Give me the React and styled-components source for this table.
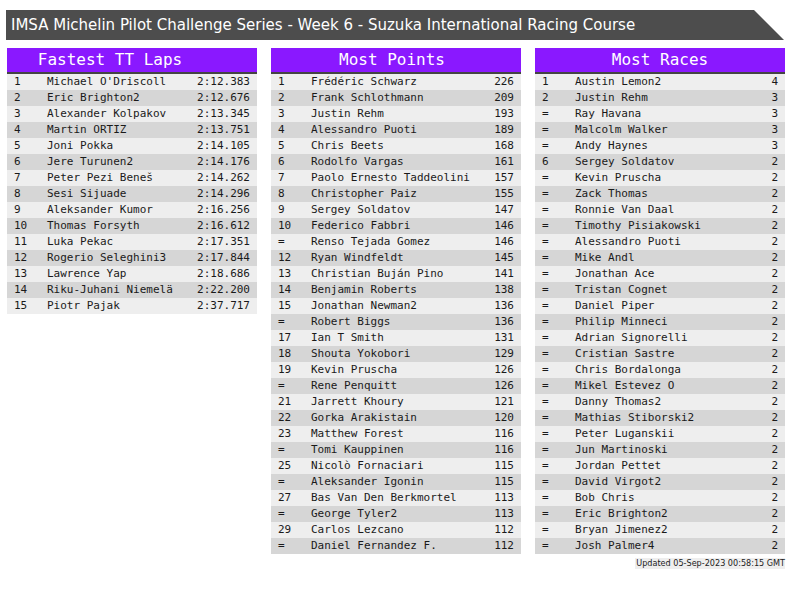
import React from "react";
import styled, { createGlobalStyle } from "styled-components";

const Global = createGlobalStyle`
  html, body { margin: 0; padding: 0; background: #fff; }
  body { font-family: "DejaVu Sans", sans-serif; }
`;

const Page = styled.div`
  padding: 10px 15px 0 6px;
  width: 800px;
  box-sizing: border-box;
`;

const TitleBar = styled.div`
  height: 30px;
  width: 778px;
  background: #4d4d4d;
  color: #fff;
  font-family: "DejaVu Sans", sans-serif;
  font-size: 15px;
  line-height: 30px;
  padding-left: 5px;
  box-sizing: border-box;
  clip-path: polygon(0 0, 748px 0, 100% 100%, 0 100%);
  white-space: nowrap;
`;

const Columns = styled.div`
  display: flex;
  align-items: flex-start;
  gap: 14px;
  margin-top: 8px;
  padding-left: 1px;
`;

const Panel = styled.div`
  width: 250px;
  display: flex;
  flex-direction: column;
`;

const Header = styled.div`
  height: 24px;
  background: #8a18ff;
  color: #fff;
  border-bottom: 2px solid #444;
  font-family: "DejaVu Sans Mono", monospace;
  font-size: 16px;
  line-height: 24px;
  text-align: center;
  padding-right: ${(p) => p.$shift || 0}px;
  white-space: nowrap;
`;

const Row = styled.div`
  display: grid;
  grid-template-columns: 33px 1fr auto;
  height: 16px;
  line-height: 16px;
  padding: 0 7px 0 7px;
  background: ${(p) => (p.$alt ? "#d6d6d6" : "#eeeeee")};
  font-family: "DejaVu Sans Mono", monospace;
  font-size: 11px;
  color: #1a1a1a;
  white-space: nowrap;
`;

const Value = styled.span`
  text-align: right;
`;

const Updated = styled.div`
  align-self: flex-end;
  margin-top: 4px;
  background: #eeeeee;
  color: #222;
  font-family: "DejaVu Sans Condensed", "DejaVu Sans", sans-serif;
  font-stretch: condensed;
  font-size: 9px;
  line-height: 11px;
  padding: 0 0 0 1px;
`;

const laps = [
  ["1", "Michael O'Driscoll", "2:12.383"],
  ["2", "Eric Brighton2", "2:12.676"],
  ["3", "Alexander Kolpakov", "2:13.345"],
  ["4", "Martin ORTIZ", "2:13.751"],
  ["5", "Joni Pokka", "2:14.105"],
  ["6", "Jere Turunen2", "2:14.176"],
  ["7", "Peter Pezi Beneš", "2:14.262"],
  ["8", "Sesi Sijuade", "2:14.296"],
  ["9", "Aleksander Kumor", "2:16.256"],
  ["10", "Thomas Forsyth", "2:16.612"],
  ["11", "Luka Pekac", "2:17.351"],
  ["12", "Rogerio Seleghini3", "2:17.844"],
  ["13", "Lawrence Yap", "2:18.686"],
  ["14", "Riku-Juhani Niemelä", "2:22.200"],
  ["15", "Piotr Pajak", "2:37.717"],
];

const points = [
  ["1", "Frédéric Schwarz", "226"],
  ["2", "Frank Schlothmann", "209"],
  ["3", "Justin Rehm", "193"],
  ["4", "Alessandro Puoti", "189"],
  ["5", "Chris Beets", "168"],
  ["6", "Rodolfo Vargas", "161"],
  ["7", "Paolo Ernesto Taddeolini", "157"],
  ["8", "Christopher Paiz", "155"],
  ["9", "Sergey Soldatov", "147"],
  ["10", "Federico Fabbri", "146"],
  ["=", "Renso Tejada Gomez", "146"],
  ["12", "Ryan Windfeldt", "145"],
  ["13", "Christian Buján Pino", "141"],
  ["14", "Benjamin Roberts", "138"],
  ["15", "Jonathan Newman2", "136"],
  ["=", "Robert Biggs", "136"],
  ["17", "Ian T Smith", "131"],
  ["18", "Shouta Yokobori", "129"],
  ["19", "Kevin Pruscha", "126"],
  ["=", "Rene Penquitt", "126"],
  ["21", "Jarrett Khoury", "121"],
  ["22", "Gorka Arakistain", "120"],
  ["23", "Matthew Forest", "116"],
  ["=", "Tomi Kauppinen", "116"],
  ["25", "Nicolò Fornaciari", "115"],
  ["=", "Aleksander Igonin", "115"],
  ["27", "Bas Van Den Berkmortel", "113"],
  ["=", "George Tyler2", "113"],
  ["29", "Carlos Lezcano", "112"],
  ["=", "Daniel Fernandez F.", "112"],
];

const races = [
  ["1", "Austin Lemon2", "4"],
  ["2", "Justin Rehm", "3"],
  ["=", "Ray Havana", "3"],
  ["=", "Malcolm Walker", "3"],
  ["=", "Andy Haynes", "3"],
  ["6", "Sergey Soldatov", "2"],
  ["=", "Kevin Pruscha", "2"],
  ["=", "Zack Thomas", "2"],
  ["=", "Ronnie Van Daal", "2"],
  ["=", "Timothy Pisiakowski", "2"],
  ["=", "Alessandro Puoti", "2"],
  ["=", "Mike Andl", "2"],
  ["=", "Jonathan Ace", "2"],
  ["=", "Tristan Cognet", "2"],
  ["=", "Daniel Piper", "2"],
  ["=", "Philip Minneci", "2"],
  ["=", "Adrian Signorelli", "2"],
  ["=", "Cristian Sastre", "2"],
  ["=", "Chris Bordalonga", "2"],
  ["=", "Mikel Estevez O", "2"],
  ["=", "Danny Thomas2", "2"],
  ["=", "Mathias Stiborski2", "2"],
  ["=", "Peter Luganskii", "2"],
  ["=", "Jun Martinoski", "2"],
  ["=", "Jordan Pettet", "2"],
  ["=", "David Virgot2", "2"],
  ["=", "Bob Chris", "2"],
  ["=", "Eric Brighton2", "2"],
  ["=", "Bryan Jimenez2", "2"],
  ["=", "Josh Palmer4", "2"],
];

function Table({ title, rows, shift, children }) {
  return (
    <Panel>
      <Header $shift={shift}>{title}</Header>
      {rows.map((r, i) => (
        <Row key={i} $alt={i % 2 === 1}>
          <span>{r[0]}</span>
          <span>{r[1]}</span>
          <Value>{r[2]}</Value>
        </Row>
      ))}
      {children}
    </Panel>
  );
}

export default function App() {
  return (
    <>
      <Global />
      <Page>
        <TitleBar>
          IMSA Michelin Pilot Challenge Series - Week 6 - Suzuka International Racing Course
        </TitleBar>
        <Columns>
          <Table title="Fastest TT Laps" rows={laps} shift={44} />
          <Table title="Most Points" rows={points} shift={8} />
          <Table title="Most Races" rows={races} shift={0}>
            <Updated>Updated 05-Sep-2023 00:58:15 GMT</Updated>
          </Table>
        </Columns>
      </Page>
    </>
  );
}
